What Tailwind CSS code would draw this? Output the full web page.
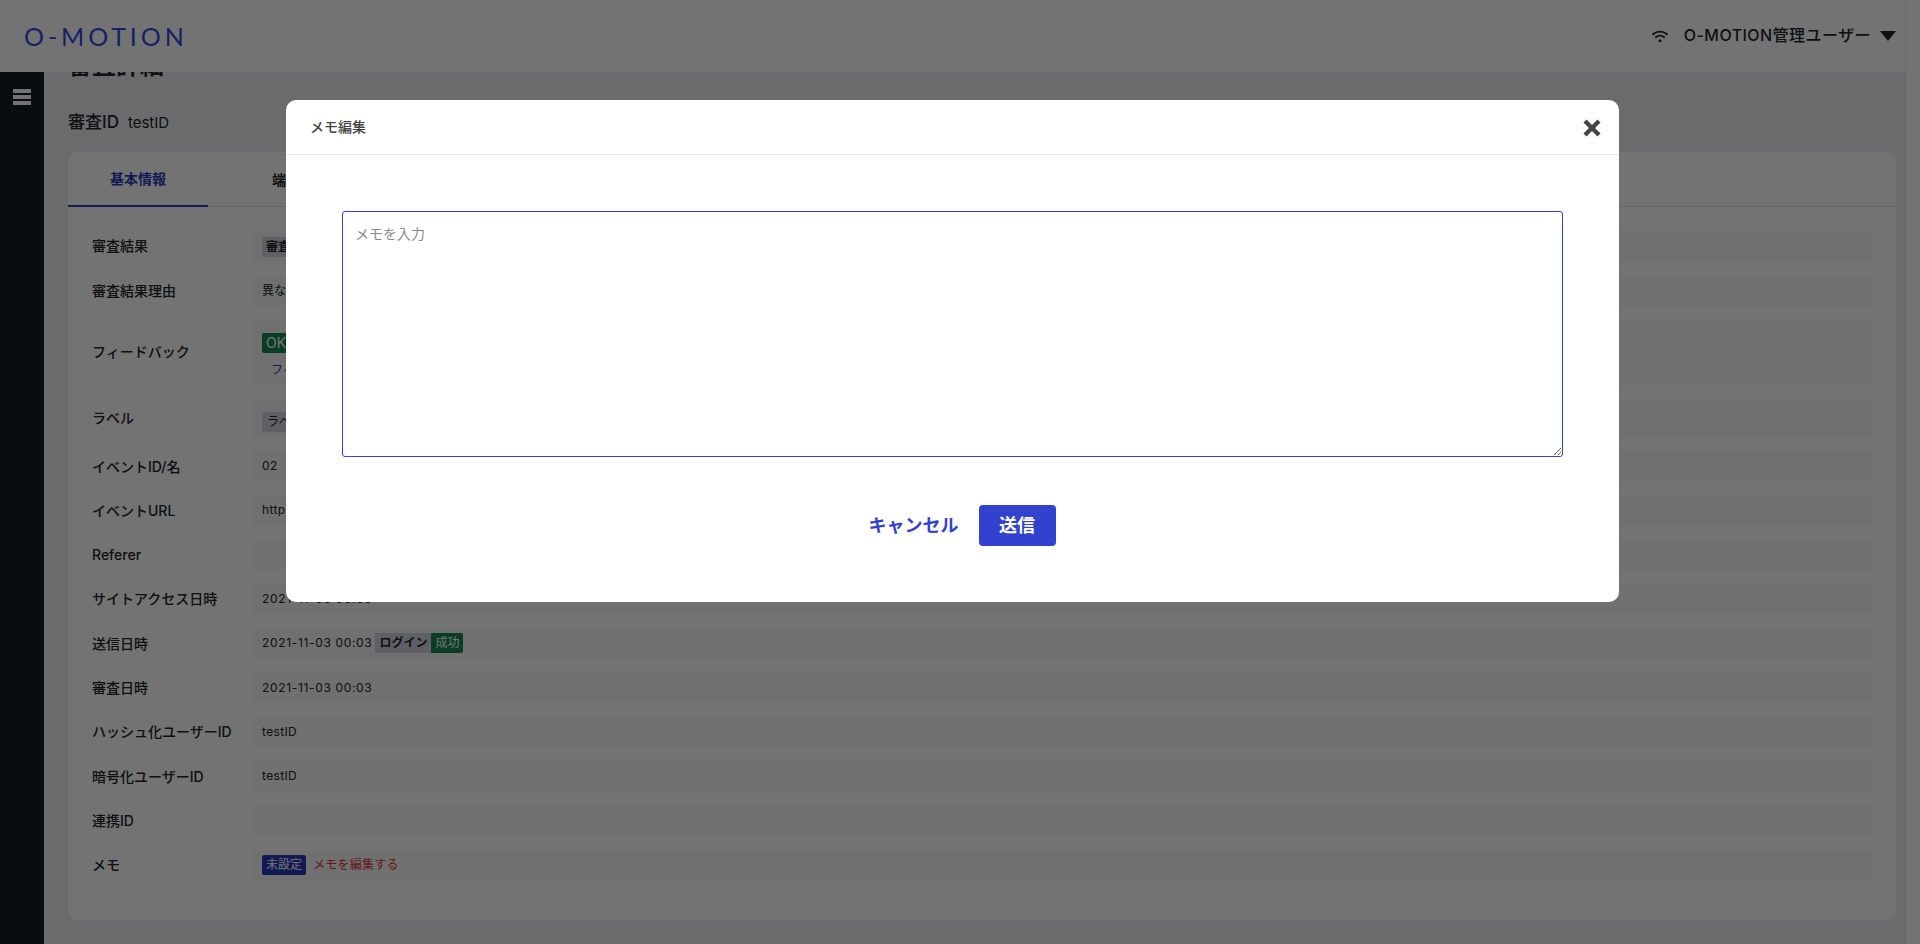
<!DOCTYPE html>
<html lang="ja">
  <head>
    <meta charset="UTF-8" />
    <meta name="viewport" content="width=device-width, initial-scale=1.0" />
    <script src="https://cdn.jsdelivr.net/npm/@tailwindcss/browser@4"></script>
    <title>審査詳細</title>
  </head>
  <body class="relative w-[1920px] h-[944px] overflow-hidden bg-[#edeef2] text-[#212529] font-['Inter','Noto_Sans_CJK_JP',sans-serif]">
    <!-- header -->
    <header class="absolute top-0 left-0 right-[15px] h-[72px] z-10 bg-white flex items-center justify-between">
      <span class="ml-[24px] mt-[1px] text-[25px] leading-none font-normal tracking-[0.155em] text-[#3647e0] font-['Lato',sans-serif]">O-MOTION</span>
      <div class="flex items-center mr-[9px] mb-[2px]">
        <svg class="w-[16px] h-[13px] mr-[16px] mt-[2px]" viewBox="0 0 16 13" fill="none" stroke="#212529" stroke-width="1.9" stroke-linecap="round">
          <path d="M1 4.2C5 .8 11 .8 15 4.2" />
          <path d="M3.8 7.2C6.2 5.3 9.8 5.3 12.2 7.2" />
          <circle cx="8" cy="10.8" r="1.5" fill="#212529" stroke="none" />
        </svg>
        <span class="text-[16px] font-medium tracking-[0.45px]">O-MOTION管理ユーザー</span>
        <svg class="w-[16px] h-[10px] ml-[9px] mt-[2px]" viewBox="0 0 16 10"><path d="M0 0H16L8 10Z" fill="#212529" /></svg>
      </div>
    </header>

    <div class="flex h-full">
      <!-- sidebar -->
      <aside class="w-[44px] shrink-0 bg-[#101d24] pt-[89px] flex flex-col items-center gap-[2.33px]">
        <span class="block w-[18px] h-[3.67px] bg-white"></span>
        <span class="block w-[18px] h-[3.67px] bg-white"></span>
        <span class="block w-[18px] h-[3.67px] bg-white"></span>
      </aside>

      <main class="w-[1862px] pl-[24px] pr-[10px] pt-[50px]">
        <h1 class="text-[24px] leading-[32px] font-bold">審査詳細</h1>
        <div class="mt-[28px] flex items-baseline h-[24px]">
          <span class="text-[17px] font-medium">審査ID</span>
          <span class="ml-[9px] text-[15px]">testID</span>
        </div>
        <div class="mt-[18px] h-[768px] bg-white rounded-[10px]">
          <div class="flex h-[55px] border-b border-[#dee2e6]">
            <div class="w-[140px] h-[55px] border-b-2 border-[#2a3bb8] flex items-center justify-center text-[14px] font-bold text-[#2a3bb8]">基本情報</div>
            <div class="ml-[64px] h-[55px] flex items-center text-[14px] font-bold">端末情報</div>
          </div>
          <dl class="px-[24px] pt-[24px] text-[12px]">
            <div class="flex mb-[14.7px]">
              <dt class="w-[160px] pb-[2px] flex items-center text-[14px] font-medium">審査結果</dt>
              <dd class="flex-1 h-[31px] px-[10px] bg-[#f6f8f6] flex items-center">
                <span class="px-[4px] h-[20px] leading-[20px] bg-[#d3d6e0] font-bold">審査OK</span>
              </dd>
            </div>
            <div class="flex mb-[14.7px]">
              <dt class="w-[160px] pb-[2px] flex items-center text-[14px] font-medium">審査結果理由</dt>
              <dd class="flex-1 h-[29.6px] px-[10px] bg-[#f6f8f6] flex items-center">異なる端末からのアクセス</dd>
            </div>
            <div class="flex mb-[14.7px]">
              <dt class="w-[160px] pb-[2px] flex items-center text-[14px] font-medium">フィードバック</dt>
              <dd class="flex-1 h-[64px] px-[10px] pt-[12px] bg-[#f6f8f6]">
                <span class="block w-fit px-[4px] h-[20px] leading-[20px] bg-[#198754] text-white text-[14px] rounded-[2px]">OK</span>
                <span class="block mt-[8px] ml-[9px] text-[#2a3bb8]">フィードバックを編集する</span>
              </dd>
            </div>
            <div class="flex mb-[14.7px]">
              <dt class="w-[160px] pb-[2px] flex items-center text-[14px] font-medium">ラベル</dt>
              <dd class="flex-1 h-[37px] px-[10px] pt-[12px] bg-[#f6f8f6] flex items-start">
                <span class="px-[5px] h-[20px] leading-[20px] bg-[#d3d6e0] rounded-[3px]">ラベル</span>
              </dd>
            </div>
            <div class="flex mb-[14.7px]">
              <dt class="w-[160px] flex items-center text-[14px] font-medium">イベントID/名</dt>
              <dd class="flex-1 h-[29.6px] px-[10px] bg-[#f6f8f6] flex items-center tracking-[0.03em]">02</dd>
            </div>
            <div class="flex mb-[14.7px]">
              <dt class="w-[160px] flex items-center text-[14px] font-medium">イベントURL</dt>
              <dd class="flex-1 h-[29.6px] px-[10px] bg-[#f6f8f6] flex items-center tracking-[0.03em]">https://example.com/login</dd>
            </div>
            <div class="flex mb-[14.7px]">
              <dt class="w-[160px] flex items-center text-[14px] font-medium">Referer</dt>
              <dd class="flex-1 h-[29.6px] px-[10px] bg-[#f6f8f6]"></dd>
            </div>
            <div class="flex mb-[14.7px]">
              <dt class="w-[160px] flex items-center text-[14px] font-medium">サイトアクセス日時</dt>
              <dd class="flex-1 h-[29.6px] px-[10px] bg-[#f6f8f6] flex items-center tracking-[0.055em]">2021-11-03 00:03</dd>
            </div>
            <div class="flex mb-[14.7px]">
              <dt class="w-[160px] flex items-center text-[14px] font-medium">送信日時</dt>
              <dd class="flex-1 h-[29.6px] px-[10px] bg-[#f6f8f6] flex items-center">
                <span class="tracking-[0.055em]">2021-11-03 00:03</span>
                <span class="ml-[3px] px-[4px] h-[20px] leading-[20px] bg-[#d3d6e0] font-bold">ログイン</span>
                <span class="px-[4px] h-[20px] leading-[20px] bg-[#198754] text-white rounded-r-[2px]">成功</span>
              </dd>
            </div>
            <div class="flex mb-[14.7px]">
              <dt class="w-[160px] flex items-center text-[14px] font-medium">審査日時</dt>
              <dd class="flex-1 h-[29.6px] px-[10px] bg-[#f6f8f6] flex items-center tracking-[0.055em]">2021-11-03 00:03</dd>
            </div>
            <div class="flex mb-[14.7px]">
              <dt class="w-[160px] flex items-center text-[14px] font-medium">ハッシュ化ユーザーID</dt>
              <dd class="flex-1 h-[29.6px] px-[10px] bg-[#f6f8f6] flex items-center tracking-[0.03em]">testID</dd>
            </div>
            <div class="flex mb-[14.7px]">
              <dt class="w-[160px] flex items-center text-[14px] font-medium">暗号化ユーザーID</dt>
              <dd class="flex-1 h-[29.6px] px-[10px] bg-[#f6f8f6] flex items-center tracking-[0.03em]">testID</dd>
            </div>
            <div class="flex mb-[14.7px]">
              <dt class="w-[160px] flex items-center text-[14px] font-medium">連携ID</dt>
              <dd class="flex-1 h-[29.6px] px-[10px] bg-[#f6f8f6]"></dd>
            </div>
            <div class="flex">
              <dt class="w-[160px] flex items-center text-[14px] font-medium">メモ</dt>
              <dd class="flex-1 h-[30px] px-[10px] bg-[#f6f8f6] flex items-center">
                <span class="px-[4px] h-[20px] leading-[20px] bg-[#2a3bb8] text-white rounded-[2px]">未設定</span>
                <span class="ml-[7px] tracking-[0.02em] text-[#dc3545]">メモを編集する</span>
              </dd>
            </div>
          </dl>
        </div>
      </main>

      <!-- page scrollbar -->
      <div class="w-[14px] shrink-0 bg-white"></div>
    </div>

    <!-- memo modal -->
    <div class="fixed inset-0 z-20 bg-black/55 pr-[15px] pt-[100px] flex justify-center items-start">
      <div class="w-[1333px] h-[502px] bg-white rounded-[10px]">
        <div class="h-[55px] border-b border-[#e5e5e5] flex items-center justify-between pl-[24px] pr-[18px]">
          <h2 class="text-[14px] font-medium text-[#444] mb-[2px]">メモ編集</h2>
          <svg class="w-[18px] h-[18px] mt-[1px]" viewBox="0 0 18 18" fill="none" stroke="#444" stroke-width="4.4"><path d="M2 2L16 16M16 2L2 16" /></svg>
        </div>
        <div class="px-[56px] pt-[56px]">
          <textarea class="block w-full h-[246px] border border-[#3242cf] rounded-[3px] px-[12px] py-[11px] text-[14px] leading-[21px] outline-none placeholder:text-[#8b8b8b]" placeholder="メモを入力"></textarea>
          <div class="mt-[48px] pl-[19px] flex items-center justify-center gap-[20px]">
            <button class="text-[18px] font-bold text-[#3242cf]">キャンセル</button>
            <button class="w-[77px] h-[41px] rounded-[4px] bg-[#3242cf] text-white text-[18px] font-bold">送信</button>
          </div>
        </div>
      </div>
    </div>
  </body>
</html>
